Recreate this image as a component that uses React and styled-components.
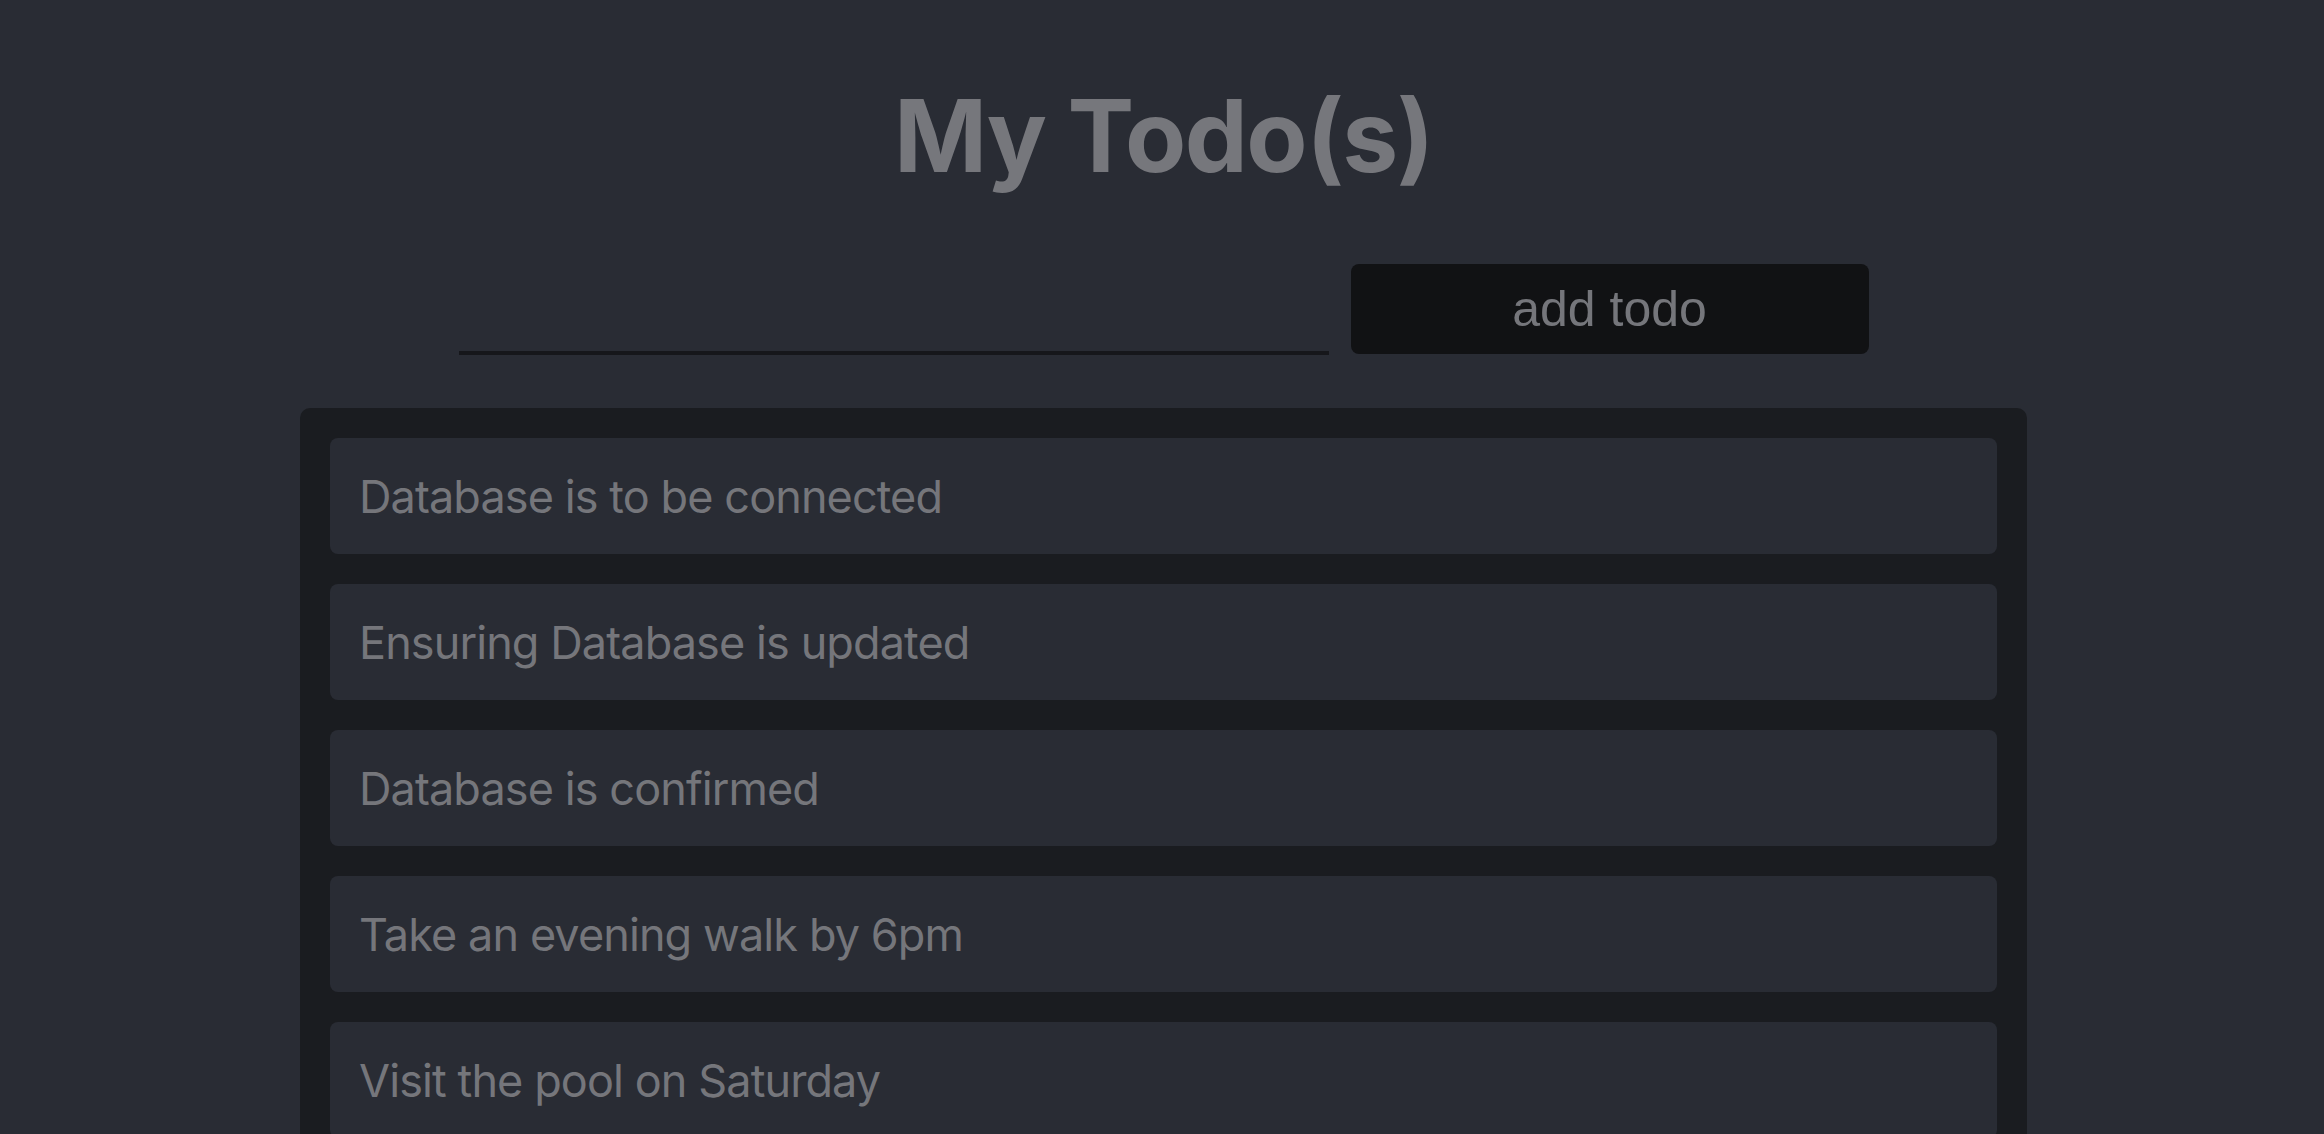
import React, { useState } from "react"
import styled, { createGlobalStyle } from "styled-components"

const GlobalStyle = createGlobalStyle`
  html, body {
    margin: 0;
    padding: 0;
    background: #292c34;
  }
  body {
    font-family: Inter, "Noto Sans", sans-serif;
    color: #75767b;
  }
`

const Page = styled.main`
  display: flex;
  flex-direction: column;
  align-items: center;
  padding: 86px 0 0 3px;
  min-height: 100vh;
  box-sizing: border-box;
`

const Title = styled.h1`
  margin: 0;
  font-family: Inter, "Liberation Sans", sans-serif;
  font-weight: 700;
  font-size: 100px;
  line-height: 100px;
  letter-spacing: -1.5px;
  color: #76777c;
`

const Form = styled.form`
  display: flex;
  align-items: flex-end;
  gap: 22px;
  margin-top: 78px;
`

const TodoInput = styled.input`
  width: 870px;
  height: 60px;
  box-sizing: border-box;
  background: transparent;
  border: none;
  border-bottom: 4px solid #16171b;
  outline: none;
  color: #75767b;
  font-family: Inter, sans-serif;
  font-size: 40px;
  margin-bottom: -1px;
`

const AddButton = styled.button`
  width: 518px;
  height: 90px;
  border: none;
  border-radius: 8px;
  background: #111214;
  color: #75767b;
  font-family: "Liberation Sans", Arial, sans-serif;
  font-size: 50px;
  cursor: pointer;
`

const List = styled.ul`
  list-style: none;
  margin: 54px 0 0;
  padding: 30px;
  width: 1727px;
  box-sizing: border-box;
  background: #1a1c20;
  border-radius: 10px;
  display: flex;
  flex-direction: column;
  gap: 30px;
`

const Item = styled.li`
  height: 116px;
  display: flex;
  align-items: center;
  padding: 0 29px;
  background: #292c34;
  border-radius: 8px;
  font-size: 45px;
  letter-spacing: -0.9px;
  color: #75767b;
`

const initialTodos = [
  "Database is to be connected",
  "Ensuring Database is updated",
  "Database is confirmed",
  "Take an evening walk by 6pm",
  "Visit the pool on Saturday",
]

export default function App() {
  const [todos, setTodos] = useState(initialTodos)
  const [text, setText] = useState("")

  const handleSubmit = e => {
    e.preventDefault()
    if (!text.trim()) return
    setTodos([...todos, text.trim()])
    setText("")
  }

  return (
    <>
      <GlobalStyle />
      <Page>
        <Title>My Todo(s)</Title>
        <Form onSubmit={handleSubmit}>
          <TodoInput value={text} onChange={e => setText(e.target.value)} />
          <AddButton type="submit">add todo</AddButton>
        </Form>
        <List>
          {todos.map((todo, i) => (
            <Item key={i}>{todo}</Item>
          ))}
        </List>
      </Page>
    </>
  )
}
